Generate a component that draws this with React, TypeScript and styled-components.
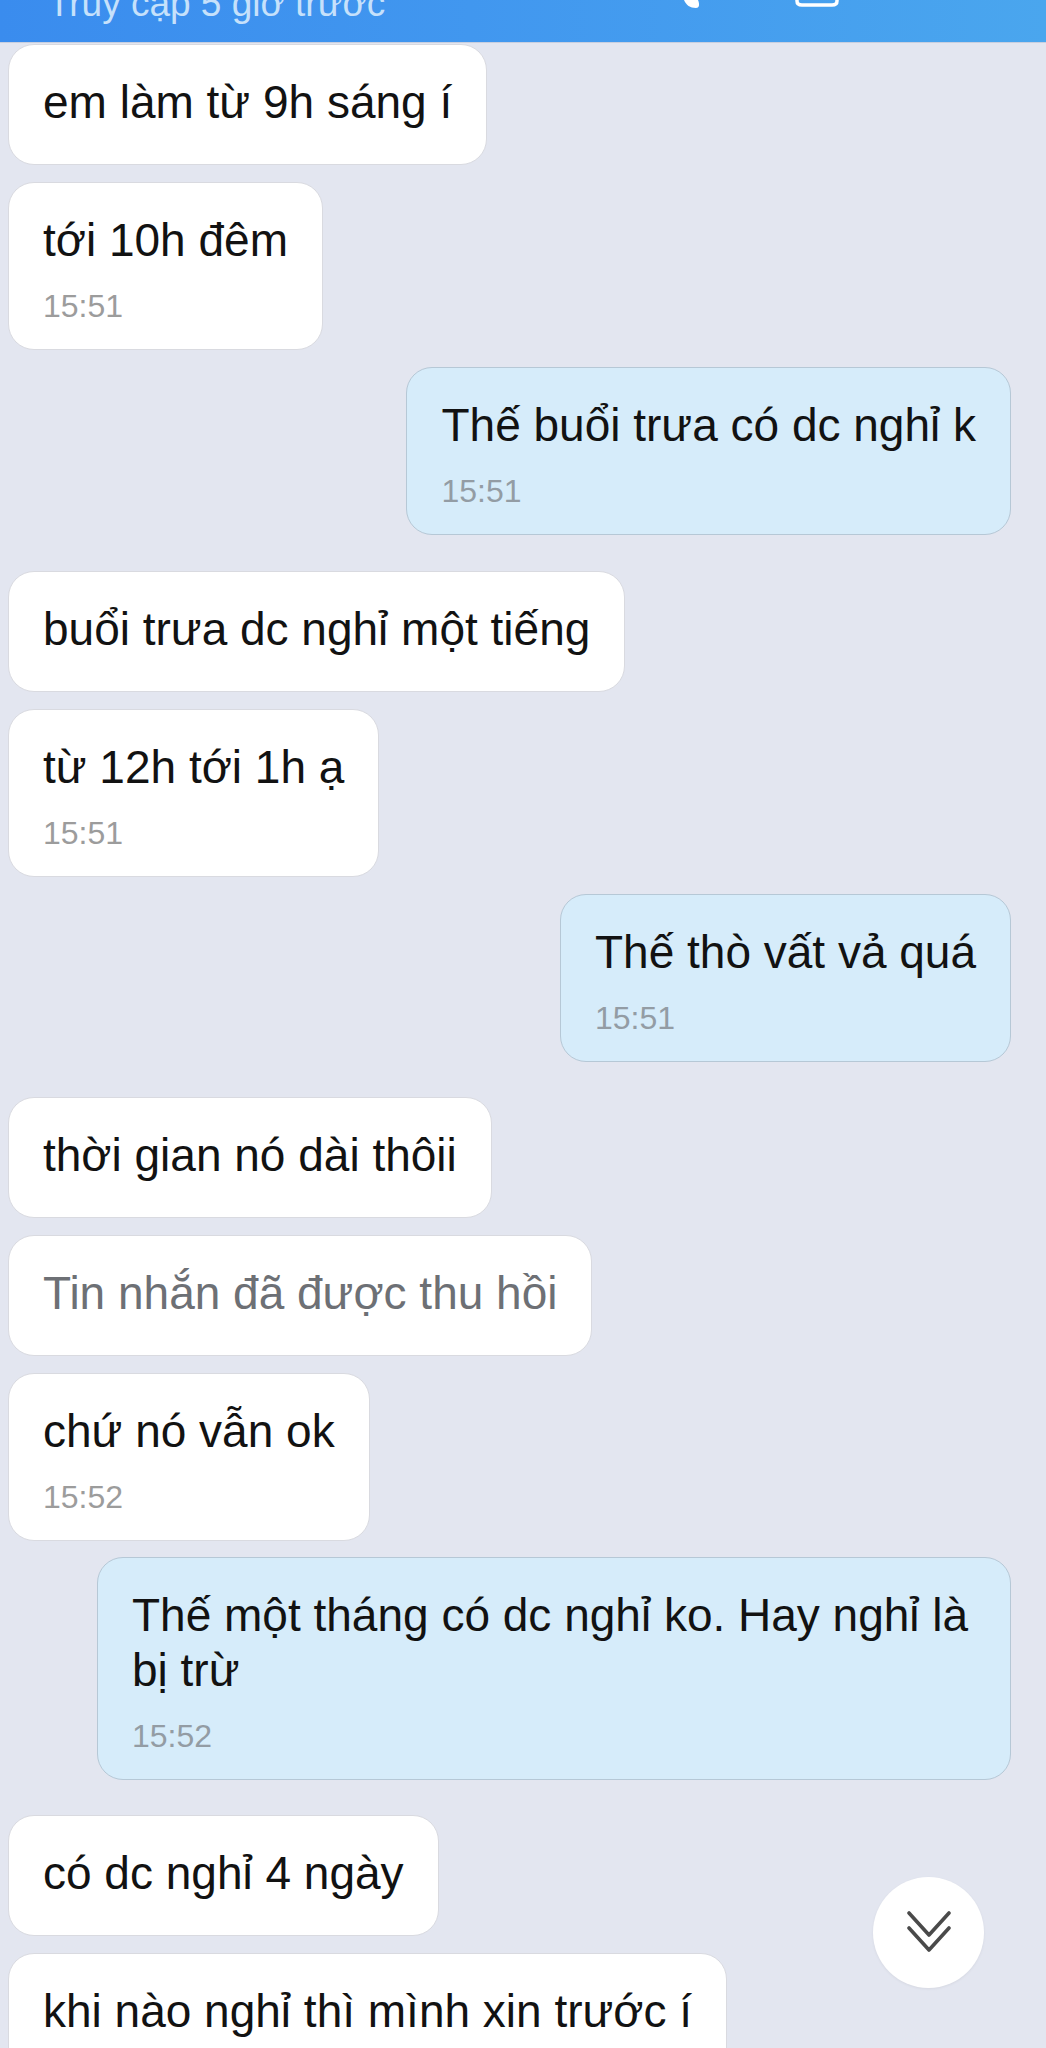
import React from "react";
import styled, { createGlobalStyle, css } from "styled-components";

const GlobalStyle = createGlobalStyle`
  html, body {
    margin: 0;
    padding: 0;
    background: #e3e6f0;
  }
  * { box-sizing: border-box; }
`;

const Screen = styled.div`
  position: relative;
  width: 1046px;
  height: 2048px;
  overflow: hidden;
  background: #e3e6f0;
  font-family: "Liberation Sans", Arial, sans-serif;
`;

const Header = styled.header`
  position: relative;
  height: 42px;
  display: flex;
  align-items: flex-end;
  padding: 0 0 13px 48px;
  overflow: hidden;
  background: linear-gradient(90deg, #3a8cee 0%, #4197ef 45%, #4aa6ee 100%);
  box-shadow: 0 1px 0 rgba(120, 140, 170, 0.25);
`;

const Status = styled.span`
  font-size: 37px;
  line-height: 50px;
  color: #c6e1fb;
  white-space: nowrap;
`;

const HeaderIcons = styled.div`
  position: absolute;
  top: 0;
  left: 680px;
  display: flex;
  gap: 90px;
`;

const Chat = styled.main`
  display: flex;
  flex-direction: column;
  padding: 0 35px 0 8px;
`;

const Row = styled.div<{ $sent?: boolean; $gap: number }>`
  display: flex;
  justify-content: ${(p) => (p.$sent ? "flex-end" : "flex-start")};
  margin-top: ${(p) => p.$gap}px;
`;

const Bubble = styled.div<{ $sent?: boolean; $timed?: boolean }>`
  max-width: 914px;
  padding: 30px 34px ${(p) => (p.$timed ? 23 : 34)}px 34px;
  border-radius: 26px;
  border: 1.5px solid #d9dae0;
  background: #ffffff;
  ${(p) =>
    p.$sent &&
    css`
      background: #d6ecfa;
      border-color: #b6c8d6;
    `}
`;

const Text = styled.div<{ $recalled?: boolean }>`
  font-size: 46px;
  line-height: 55px;
  color: ${(p) => (p.$recalled ? "#6d7075" : "#121212")};
`;

const Time = styled.div<{ $sent?: boolean }>`
  margin-top: 18px;
  font-size: 32px;
  line-height: 40px;
  color: ${(p) => (p.$sent ? "#939ca4" : "#9c9c9c")};
`;

const ScrollButton = styled.button`
  position: absolute;
  left: 873px;
  top: 1877px;
  width: 111px;
  height: 111px;
  border-radius: 50%;
  border: none;
  padding: 0;
  background: #ffffff;
  box-shadow: 0 1px 3px rgba(0, 0, 0, 0.06);
  display: flex;
  align-items: center;
  justify-content: center;
`;

type Msg = {
  text: string;
  sent?: boolean;
  time?: string;
  recalled?: boolean;
  gap: number;
};

const messages: Msg[] = [
  { text: "em làm từ 9h sáng í", gap: 2 },
  { text: "tới 10h đêm", time: "15:51", gap: 17 },
  { text: "Thế buổi trưa có dc nghỉ k", sent: true, time: "15:51", gap: 17 },
  { text: "buổi trưa dc nghỉ một tiếng", gap: 36 },
  { text: "từ 12h tới 1h ạ", time: "15:51", gap: 17 },
  { text: "Thế thò vất vả quá", sent: true, time: "15:51", gap: 17 },
  { text: "thời gian nó dài thôii", gap: 35 },
  { text: "Tin nhắn đã được thu hồi", recalled: true, gap: 17 },
  { text: "chứ nó vẫn ok", time: "15:52", gap: 17 },
  {
    text: "Thế một tháng có dc nghỉ ko. Hay nghỉ là bị trừ",
    sent: true,
    time: "15:52",
    gap: 16,
  },
  { text: "có dc nghỉ 4 ngày", gap: 35 },
  { text: "khi nào nghỉ thì mình xin trước í", gap: 17 },
];

const PhoneTail = () => (
  <svg width="24" height="10" viewBox="0 0 24 10">
    <path d="M4 0 C6 5 10 8 16 8 C19 8 20 5 18 0 Z" fill="#ffffff" />
  </svg>
);

const VideoTail = () => (
  <svg width="46" height="8" viewBox="0 0 46 8">
    <path
      d="M3 0 V1 Q3 5 8 5 H38 Q43 5 43 1 V0"
      fill="none"
      stroke="#ffffff"
      strokeWidth="3.5"
    />
  </svg>
);

const ChevronsDown = () => (
  <svg width="44" height="44" viewBox="0 0 44 44">
    <g
      fill="none"
      stroke="#4a4a4a"
      strokeWidth="3.6"
      strokeLinecap="round"
      strokeLinejoin="round"
    >
      <polyline points="2,2 22,24 42,2" />
      <polyline points="2,17 22,39 42,17" />
    </g>
  </svg>
);

export default function App() {
  return (
    <Screen>
      <GlobalStyle />
      <Header>
        <Status>Truy cập 5 giờ trước</Status>
        <HeaderIcons>
          <PhoneTail />
          <VideoTail />
        </HeaderIcons>
      </Header>
      <Chat>
        {messages.map((m, i) => (
          <Row key={i} $sent={m.sent} $gap={m.gap}>
            <Bubble $sent={m.sent} $timed={!!m.time}>
              <Text $recalled={m.recalled}>{m.text}</Text>
              {m.time && <Time $sent={m.sent}>{m.time}</Time>}
            </Bubble>
          </Row>
        ))}
      </Chat>
      <ScrollButton aria-label="Cuộn xuống">
        <ChevronsDown />
      </ScrollButton>
    </Screen>
  );
}
